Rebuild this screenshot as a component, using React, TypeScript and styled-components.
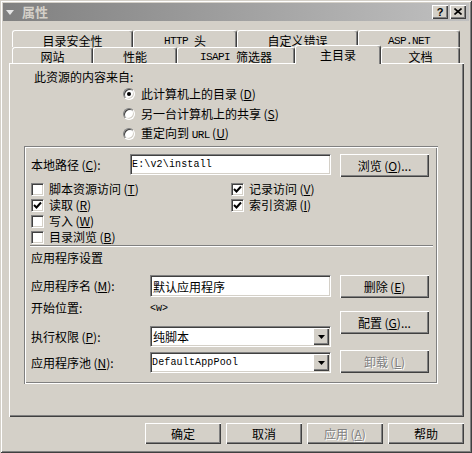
import React from "react";
import styled, { createGlobalStyle, css } from "styled-components";

const FONT = `"Noto Sans CJK SC", "Liberation Sans", sans-serif`;
const MONO = `"Liberation Mono", "Noto Sans CJK SC", monospace`;

const GlobalStyle = createGlobalStyle`
  html, body { margin: 0; padding: 0; background: #d4d0c8; }
  body { font-family: ${FONT}; font-size: 12px; color: #000; }
  * { box-sizing: border-box; }
  u { text-decoration: underline; text-underline-offset: 1px; }
`;

const raised = css`
  box-shadow: inset 1px 1px #fff, inset -1px -1px #404040, inset -2px -2px #808080;
`;

const sunken = css`
  border: 1px solid;
  border-color: #808080 #fff #fff #808080;
  box-shadow: inset 1px 1px #404040, inset -1px -1px #d4d0c8;
`;

const Window = styled.div`
  width: 472px;
  height: 453px;
  padding: 3px;
  display: flex;
  flex-direction: column;
  background: #d4d0c8;
  box-shadow: inset 1px 1px #d4d0c8, inset -1px -1px #404040, inset 2px 2px #fff,
    inset -2px -2px #808080;
`;

const TitleBar = styled.div`
  height: 18px;
  flex: 0 0 18px;
  display: flex;
  align-items: center;
  padding: 0 3px 0 2px;
  background: linear-gradient(to right, #808080, #c0c0c0);
`;

const TitleIcon = styled.svg`
  margin-left: 1px;
  flex: 0 0 auto;
`;

const TitleText = styled.span`
  margin-left: 8px;
  font-weight: bold;
  font-size: 13px;
  line-height: 18px;
  color: #d4d0c8;
`;

const TitleSpacer = styled.div`
  flex: 1;
`;

const CaptionButton = styled.div<{ $gap?: number }>`
  width: 16px;
  height: 14px;
  margin-left: ${(p) => p.$gap ?? 0}px;
  background: #d4d0c8;
  ${raised};
  display: flex;
  align-items: center;
  justify-content: center;
  font-family: "Liberation Sans", sans-serif;
  font-weight: bold;
  font-size: 11px;
  line-height: 12px;
  padding-bottom: 1px;
`;

const Body = styled.div`
  flex: 1;
  display: flex;
  flex-direction: column;
  padding: 9px 5px 0 6px;
`;

const TabStrip = styled.div`
  margin-left: 3px;
  width: 448px;
  display: flex;
  flex-direction: column;
`;

const TabRow = styled.div<{ $h: number }>`
  display: flex;
  height: ${(p) => p.$h}px;
  align-items: flex-start;
`;

const Tab = styled.div<{ $w: number; $active?: boolean }>`
  flex: 0 0 ${(p) => p.$w}px;
  height: 100%;
  border-top: 1px solid #fff;
  border-left: 1px solid #fff;
  border-right: 1px solid #404040;
  box-shadow: inset -1px 0 #808080;
  border-radius: 3px 3px 0 0;
  background: #d4d0c8;
  display: flex;
  justify-content: center;
  align-items: center;
  padding-top: 3px;
  line-height: 14px;
  white-space: nowrap;
  ${(p) =>
    p.$active &&
    css`
      position: relative;
      z-index: 1;
      height: 19px;
      margin-top: -2px;
      padding-top: 0;
    `}
`;

const Latin = styled.span`
  font-family: ${MONO};
  font-size: 11px;
  letter-spacing: -0.6px;
`;

const Panel = styled.div`
  width: 455px;
  height: 354px;
  display: flex;
  flex-direction: column;
  box-shadow: inset 1px 1px #fff, inset -1px -1px #404040, inset -2px -2px #808080;
`;

const SourceLabel = styled.div`
  margin: 7px 0 0 25px;
  line-height: 14px;
`;

const RadioList = styled.div`
  margin-left: 114px;
  display: flex;
  flex-direction: column;
`;

const RadioRow = styled.div`
  height: 20px;
  display: flex;
  align-items: center;
`;

const RadioCircle = styled.span<{ $on?: boolean }>`
  width: 12px;
  height: 12px;
  border-radius: 50%;
  background: #fff;
  border: 1px solid;
  border-color: #808080 #fff #fff #808080;
  box-shadow: inset 1px 1px #404040, inset -1px -1px #d4d0c8;
  display: flex;
  align-items: center;
  justify-content: center;
  flex: 0 0 12px;
  &::after {
    content: "";
    width: 4px;
    height: 4px;
    border-radius: 50%;
    background: #000;
    display: ${(p) => (p.$on ? "block" : "none")};
  }
`;

const OptionLabel = styled.span`
  margin-left: 6px;
  line-height: 14px;
  white-space: nowrap;
`;

const GroupBox = styled.div`
  margin: 2px 0 0 15px;
  width: 414px;
  height: 238px;
  padding: 8px 0 0 7px;
  display: flex;
  flex-direction: column;
  box-shadow: inset 1px 1px #808080, inset -1px -1px #fff, inset 2px 2px #fff,
    inset -2px -2px #808080;
`;

const Row = styled.div<{ $h?: number; $mt?: number }>`
  display: flex;
  align-items: flex-start;
  ${(p) => (p.$h ? `height: ${p.$h}px;` : "")}
  margin-top: ${(p) => p.$mt ?? 0}px;
`;

const FieldLabel = styled.div<{ $w: number; $lh: number }>`
  width: ${(p) => p.$w}px;
  flex: 0 0 ${(p) => p.$w}px;
  line-height: ${(p) => p.$lh}px;
  white-space: nowrap;
`;

const TextBox = styled.div<{ $w: number; $h: number; $mono?: boolean }>`
  width: ${(p) => p.$w}px;
  height: ${(p) => p.$h}px;
  flex: 0 0 ${(p) => p.$w}px;
  background: #fff;
  ${sunken};
  display: flex;
  align-items: center;
  padding-left: ${(p) => (p.$mono ? 1 : 2)}px;
  white-space: nowrap;
  overflow: hidden;
  ${(p) =>
    p.$mono &&
    css`
      font-family: ${MONO};
      font-size: 10px;
      letter-spacing: 0.15px;
    `}
`;

const SelectBox = styled(TextBox)`
  padding-right: 0;
  justify-content: space-between;
`;

const SelectText = styled.span`
  line-height: 14px;
`;

const ArrowButton = styled.div`
  width: 16px;
  height: 17px;
  flex: 0 0 16px;
  background: #d4d0c8;
  ${raised};
  display: flex;
  align-items: center;
  justify-content: center;
  margin-right: 1px;
`;

const PushButton = styled.div<{ $w: number; $h: number; $mt?: number; $disabled?: boolean }>`
  width: ${(p) => p.$w}px;
  height: ${(p) => p.$h}px;
  flex: 0 0 auto;
  margin-top: ${(p) => p.$mt ?? 0}px;
  background: #d4d0c8;
  ${raised};
  display: flex;
  align-items: center;
  justify-content: center;
  line-height: 14px;
  white-space: nowrap;
  ${(p) =>
    p.$disabled &&
    css`
      color: #808080;
      text-shadow: 1px 1px #fff;
    `}
`;

const CheckGrid = styled.div`
  margin-top: 4px;
  display: grid;
  grid-template-columns: 200px auto;
  grid-auto-rows: 16px;
`;

const CheckItem = styled.div`
  display: flex;
  align-items: center;
`;

const CheckBox = styled.span`
  width: 13px;
  height: 13px;
  flex: 0 0 13px;
  background: #fff;
  ${sunken};
  display: flex;
  align-items: center;
  justify-content: center;
`;

const CheckLabel = styled.span`
  margin-left: 5px;
  line-height: 14px;
  white-space: nowrap;
`;

const Separator = styled.div`
  margin-left: -1px;
  width: 403px;
  height: 2px;
  border-top: 1px solid #808080;
  border-bottom: 1px solid #fff;
`;

const SectionTitle = styled.div`
  margin-top: 3px;
  line-height: 16px;
`;

const AppSection = styled.div`
  margin-top: 9px;
  display: flex;
  align-items: flex-start;
`;

const LeftColumn = styled.div`
  width: 300px;
  display: flex;
  flex-direction: column;
`;

const RightColumn = styled.div`
  margin-left: 9px;
  display: flex;
  flex-direction: column;
`;

const AngleValue = styled.span`
  font-family: ${MONO};
  font-size: 10px;
  line-height: 18px;
`;

const ButtonBar = styled.div`
  margin-top: 6px;
  display: flex;
  justify-content: flex-end;
  gap: 5px;
`;

const Acc = ({ k }: { k: string }) => (
  <>
    {"\u2009("}
    <u>{k}</u>
    {")"}
  </>
);

const Check = () => (
  <svg width="9" height="9" viewBox="0 0 9 9">
    <polyline points="1,4 3.5,6.5 8,1.5" fill="none" stroke="#000" strokeWidth="2" />
  </svg>
);

const DownArrow = () => (
  <svg width="7" height="4" viewBox="0 0 7 4">
    <polygon points="0,0 7,0 3.5,4" fill="#000" />
  </svg>
);

const Radio = ({ on, children }: { on?: boolean; children: React.ReactNode }) => (
  <RadioRow>
    <RadioCircle $on={on} />
    <OptionLabel>{children}</OptionLabel>
  </RadioRow>
);

const Checked = ({ on, children }: { on?: boolean; children: React.ReactNode }) => (
  <CheckItem>
    <CheckBox>{on && <Check />}</CheckBox>
    <CheckLabel>{children}</CheckLabel>
  </CheckItem>
);

export default function App() {
  return (
    <>
      <GlobalStyle />
      <Window>
        <TitleBar>
          <TitleIcon width="8" height="5" viewBox="0 0 8 5">
            <polygon points="0,0 8,0 4,5" fill="#e6e6e6" />
          </TitleIcon>
          <TitleText>属性</TitleText>
          <TitleSpacer />
          <CaptionButton>?</CaptionButton>
          <CaptionButton $gap={2}>
            <svg width="8" height="7" viewBox="0 0 8 7">
              <path d="M0.5 0.5 L7.5 6.5 M7.5 0.5 L0.5 6.5" stroke="#000" strokeWidth="1.6" />
            </svg>
          </CaptionButton>
        </TitleBar>
        <Body>
          <TabStrip>
            <TabRow $h={17}>
              <Tab $w={121}>目录安全性</Tab>
              <Tab $w={104}>
                <Latin>HTTP&nbsp;</Latin>头
              </Tab>
              <Tab $w={121}>自定义错误</Tab>
              <Tab $w={102}>
                <Latin>ASP.NET</Latin>
              </Tab>
            </TabRow>
            <TabRow $h={16}>
              <Tab $w={81}>网站</Tab>
              <Tab $w={84}>性能</Tab>
              <Tab $w={118}>
                <Latin>ISAPI&nbsp;</Latin>筛选器
              </Tab>
              <Tab $w={86} $active>
                主目录
              </Tab>
              <Tab $w={79}>文档</Tab>
            </TabRow>
          </TabStrip>
          <Panel>
            <SourceLabel>此资源的内容来自:</SourceLabel>
            <RadioList>
              <Radio on>
                此计算机上的目录<Acc k="D" />
              </Radio>
              <Radio>
                另一台计算机上的共享<Acc k="S" />
              </Radio>
              <Radio>
                重定向到 <Latin>URL</Latin>
                <Acc k="U" />
              </Radio>
            </RadioList>
            <GroupBox>
              <Row>
                <FieldLabel $w={99} $lh={21}>
                  本地路径<Acc k="C" />:
                </FieldLabel>
                <TextBox $w={201} $h={21} $mono>
                  E:\v2\install
                </TextBox>
                <PushButton $w={89} $h={23} style={{ marginLeft: 9 }}>
                  浏览<Acc k="O" />...
                </PushButton>
              </Row>
              <CheckGrid>
                <Checked>
                  脚本资源访问<Acc k="T" />
                </Checked>
                <Checked on>
                  记录访问<Acc k="V" />
                </Checked>
                <Checked on>
                  读取<Acc k="R" />
                </Checked>
                <Checked on>
                  索引资源<Acc k="I" />
                </Checked>
                <Checked>
                  写入<Acc k="W" />
                </Checked>
                <span />
                <Checked>
                  目录浏览<Acc k="B" />
                </Checked>
              </CheckGrid>
              <Separator />
              <SectionTitle>应用程序设置</SectionTitle>
              <AppSection>
                <LeftColumn>
                  <Row $h={22}>
                    <FieldLabel $w={119} $lh={22}>
                      应用程序名<Acc k="M" />:
                    </FieldLabel>
                    <TextBox $w={181} $h={22}>
                      默认应用程序
                    </TextBox>
                  </Row>
                  <Row $h={16} $mt={3}>
                    <FieldLabel $w={119} $lh={16}>
                      开始位置:
                    </FieldLabel>
                    <AngleValue>&lt;w&gt;</AngleValue>
                  </Row>
                  <Row $h={21} $mt={10}>
                    <FieldLabel $w={119} $lh={21}>
                      执行权限<Acc k="P" />:
                    </FieldLabel>
                    <SelectBox $w={181} $h={21}>
                      <SelectText>纯脚本</SelectText>
                      <ArrowButton>
                        <DownArrow />
                      </ArrowButton>
                    </SelectBox>
                  </Row>
                  <Row $h={21} $mt={5}>
                    <FieldLabel $w={119} $lh={21}>
                      应用程序池<Acc k="N" />:
                    </FieldLabel>
                    <SelectBox $w={181} $h={21} $mono>
                      <SelectText>DefaultAppPool</SelectText>
                      <ArrowButton>
                        <DownArrow />
                      </ArrowButton>
                    </SelectBox>
                  </Row>
                </LeftColumn>
                <RightColumn>
                  <PushButton $w={89} $h={23}>
                    删除<Acc k="E" />
                  </PushButton>
                  <PushButton $w={89} $h={23} $mt={13}>
                    配置<Acc k="G" />...
                  </PushButton>
                  <PushButton $w={89} $h={23} $mt={16} $disabled>
                    卸载<Acc k="L" />
                  </PushButton>
                </RightColumn>
              </AppSection>
            </GroupBox>
          </Panel>
          <ButtonBar>
            <PushButton $w={76} $h={21}>
              确定
            </PushButton>
            <PushButton $w={76} $h={21}>
              取消
            </PushButton>
            <PushButton $w={76} $h={21} $disabled>
              应用<Acc k="A" />
            </PushButton>
            <PushButton $w={76} $h={21}>
              帮助
            </PushButton>
          </ButtonBar>
        </Body>
      </Window>
    </>
  );
}
